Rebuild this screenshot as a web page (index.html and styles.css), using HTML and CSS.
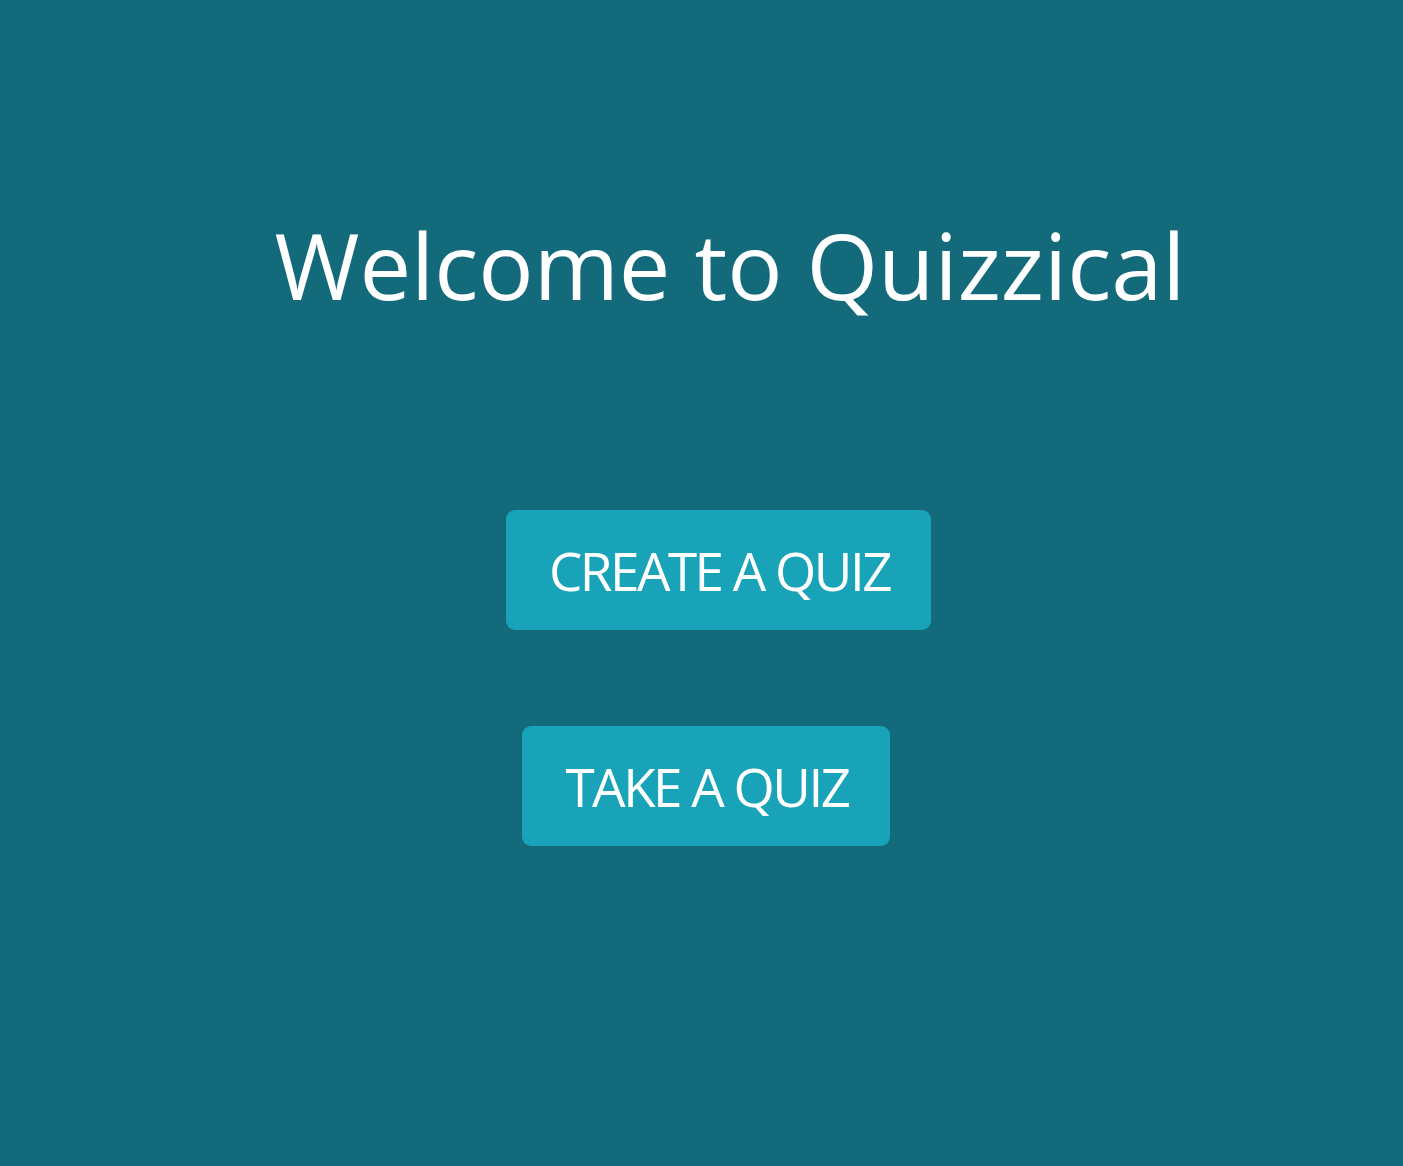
FILE: index.html
```html
<!DOCTYPE html>
<html lang="en">
<head>
<meta charset="utf-8">
<title>Quizzical</title>
<link rel="stylesheet" href="styles.css">
</head>
<body>
<main class="home">
  <h1 class="title">Welcome to Quizzical</h1>
  <div class="actions">
    <button class="btn btn-create" type="button">CREATE A QUIZ</button>
    <button class="btn btn-take" type="button">TAKE A QUIZ</button>
  </div>
</main>
</body>
</html>
```

FILE: styles.css
```css
html, body {
  margin: 0;
  padding: 0;
  height: 100%;
}
body {
  background: #126a7b;
  color: #ffffff;
}
.home {
  display: flex;
  flex-direction: column;
  align-items: center;
  padding-top: 201px;
}
.title {
  margin: 0 0 0 57px;
  font-family: "Open Sans", sans-serif;
  font-weight: 400;
  font-size: 92px;
  line-height: 128px;
}
.actions {
  display: flex;
  flex-direction: column;
  align-items: center;
  gap: 96px;
  margin-top: 181px;
}
.btn {
  background: #18a3b9;
  color: #ffffff;
  border: none;
  border-radius: 9px;
  height: 120px;
  padding: 0 41px 0 43px;
  font-family: "Open Sans", sans-serif;
  font-size: 53px;
  letter-spacing: -2.5px;
  font-weight: 400;
}
.btn-create { margin-left: 34px; }
.btn-take { margin-left: 9px; }
```
